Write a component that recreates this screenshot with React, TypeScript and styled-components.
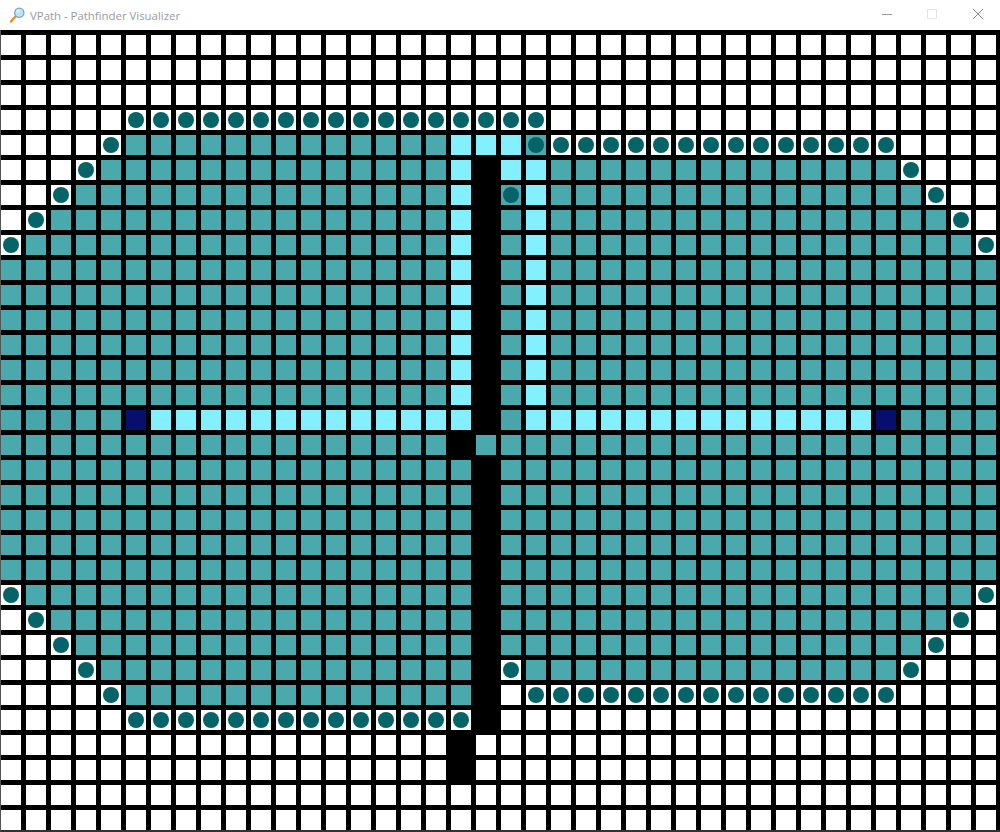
import React from 'react'
import styled, { createGlobalStyle } from 'styled-components'

type Kind = 'w' | 't' | 'd' | 'l' | 'k' | 'n' | 'o' | 'p'

const CELL_COLORS: Record<Kind, string> = {
  w: '#ffffff',
  t: '#4aa9ad',
  d: '#48a6aa',
  l: '#83efff',
  k: '#000000',
  n: '#080e6e',
  o: '#ffffff',
  p: '#4aa9ad',
}

// one line per grid row, run-length encoded
const ROWS = [
  'w40',
  'w40',
  'w40',
  'w5 o17 w18',
  'w4 o1 t13 l3 p1 o14 w4',
  'w3 o1 t14 l1 k1 l2 t14 o1 w3',
  'w2 o1 t15 l1 k1 p1 l1 t15 o1 w2',
  'w1 o1 t16 l1 k1 t1 l1 t16 o1 w1',
  'o1 t17 l1 k1 t1 l1 t17 o1',
  't18 l1 k1 t1 l1 t18',
  't18 l1 k1 t1 l1 t18',
  't18 l1 k1 t1 l1 t18',
  't18 l1 k1 t1 l1 t18',
  't18 l1 k1 t1 l1 t18',
  't18 l1 k1 t1 l1 t18',
  't1 d2 t2 n1 l13 k1 d1 l14 n1 t4',
  't18 k1 t21',
  't19 k1 t20',
  't19 k1 t20',
  't19 k1 t20',
  't19 k1 t20',
  't19 k1 t20',
  'o1 t18 k1 t19 o1',
  'w1 o1 t17 k1 t18 o1 w1',
  'w2 o1 t16 k1 t17 o1 w2',
  'w3 o1 t15 k1 o1 t15 o1 w3',
  'w4 o1 t14 k1 w1 o15 w4',
  'w5 o14 k1 w20',
  'w18 k1 w21',
  'w18 k1 w21',
  'w40',
  'w40',
]

const cells: Kind[] = ROWS.flatMap((row) =>
  row.split(' ').flatMap((run) => Array<Kind>(Number(run.slice(1))).fill(run[0] as Kind))
)

const GlobalStyle = createGlobalStyle`
  html, body {
    margin: 0;
    padding: 0;
    background: #000;
    overflow: hidden;
  }
`

const Page = styled.div`
  width: 1000px;
  height: 832px;
  display: flex;
  flex-direction: column;
  font-family: 'Open Sans', 'Liberation Sans', sans-serif;
`

const TitleBar = styled.div`
  height: 30px;
  flex: none;
  display: flex;
  align-items: center;
  background: #ffffff;
`

const AppIcon = styled.svg`
  width: 16px;
  height: 16px;
  margin-left: 9px;
  flex: none;
`

const Title = styled.div`
  margin-left: 5px;
  flex: 1;
  font-size: 11.4px;
  color: #9b9ba0;
  white-space: nowrap;
`

const WindowButton = styled.div<{ $close?: boolean }>`
  width: 45px;
  height: 30px;
  box-sizing: border-box;
  display: flex;
  align-items: center;
  justify-content: center;
  padding-bottom: 2px;
  ${({ $close }) => ($close ? 'padding-left: 1px;' : 'padding-right: 1px;')}
`

const Board = styled.div`
  flex: 1;
  display: grid;
  grid-template-columns: repeat(40, 20px);
  grid-auto-rows: 20px;
  gap: 5px;
  padding-top: 5px;
  background: #000;
  border-left: 1px solid #555;
  border-bottom: 2px solid #333;
`

const Cell = styled.div<{ $kind: Kind }>`
  display: flex;
  align-items: center;
  justify-content: center;
  background: ${({ $kind }) => CELL_COLORS[$kind]};
`

const Frontier = styled.div`
  width: 16px;
  height: 16px;
  border-radius: 50%;
  background: #056467;
`

export default function App() {
  return (
    <Page>
      <GlobalStyle />
      <TitleBar>
        <AppIcon viewBox="0 0 16 16">
          <path d="M2 14.5L6.5 9.5" stroke="#f08a24" strokeWidth="2.4" strokeLinecap="round" />
          <circle cx="10.3" cy="5.7" r="4.6" fill="#bfe3f5" stroke="#6fa8c8" strokeWidth="1.3" />
          <path d="M7.9 5a2.8 2.8 0 0 1 2.4-2" stroke="#ffffff" strokeWidth="1" fill="none" />
        </AppIcon>
        <Title>VPath - Pathfinder Visualizer</Title>
        <WindowButton>
          <svg width="10" height="10" viewBox="0 0 10 10">
            <path d="M0 5.5H10" stroke="#9a9a9a" strokeWidth="1" />
          </svg>
        </WindowButton>
        <WindowButton>
          <svg width="10" height="10" viewBox="0 0 10 10">
            <rect x="0.5" y="0.5" width="9" height="9" fill="none" stroke="#e3e3e3" strokeWidth="1" />
          </svg>
        </WindowButton>
        <WindowButton $close>
          <svg width="10" height="10" viewBox="0 0 10 10">
            <path d="M0 0L10 10M10 0L0 10" stroke="#8a8a8a" strokeWidth="1" />
          </svg>
        </WindowButton>
      </TitleBar>
      <Board>
        {cells.map((kind, i) => (
          <Cell key={i} $kind={kind}>
            {(kind === 'o' || kind === 'p') && <Frontier />}
          </Cell>
        ))}
      </Board>
    </Page>
  )
}
